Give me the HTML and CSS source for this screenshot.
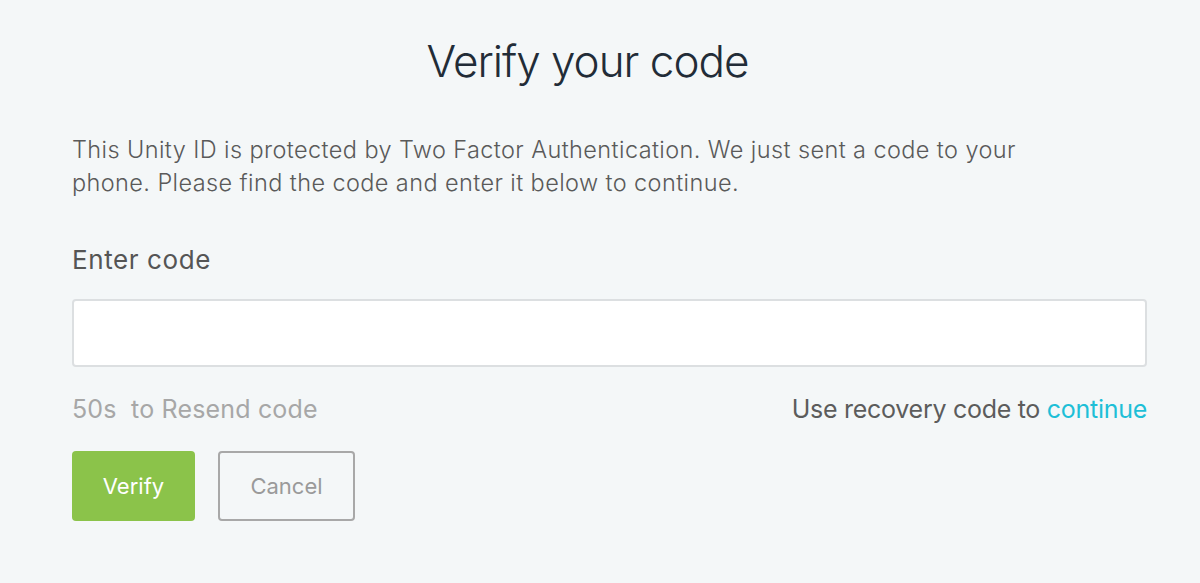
FILE: index.html
```html
<!DOCTYPE html>
<html lang="en">
<head>
<meta charset="utf-8">
<title>Verify your code</title>
<link rel="stylesheet" href="styles.css">
</head>
<body>
<main class="page">
  <h1 class="title">Verify your code</h1>
  <p class="intro">This Unity ID is protected by Two Factor Authentication. We just sent a code to your phone. Please find the code and enter it below to continue.</p>
  <label class="label" for="code">Enter code</label>
  <input class="code-input" id="code" type="text">
  <div class="meta-row">
    <span class="resend">50s&nbsp; to Resend code</span>
    <span class="recovery">Use recovery code to <a class="link" href="#">continue</a></span>
  </div>
  <div class="actions">
    <button class="btn btn-primary" type="button">Verify</button>
    <button class="btn btn-secondary" type="button">Cancel</button>
  </div>
</main>
</body>
</html>
```
FILE: styles.css
```css
html, body {
  margin: 0;
  padding: 0;
  background: #f4f7f8;
}
body {
  font-family: Inter, "Noto Sans", "Liberation Sans", sans-serif;
  color: #5a5a5a;
}
.page {
  width: 1075px;
  padding: 33px 0 0 72px;
  display: flex;
  flex-direction: column;
}
.title {
  margin: 0;
  padding-right: 44px;
  text-align: center;
  font-size: 44px;
  font-weight: 300;
  letter-spacing: -1px;
  line-height: 56px;
  color: #222c37;
}
.intro {
  margin: 45px 0 0 0;
  width: 990px;
  font-size: 23.5px;
  font-weight: 300;
  letter-spacing: 0.4px;
  line-height: 32.5px;
  color: #5a5a5a;
}
.label {
  margin-top: 45px;
  font-size: 26px;
  letter-spacing: 0.6px;
  line-height: 32px;
  color: #555;
}
.code-input {
  margin-top: 23px;
  box-sizing: border-box;
  width: 100%;
  height: 68px;
  border: 2px solid #dcdfe1;
  border-radius: 4px;
  background: #fff;
  outline: none;
  font: inherit;
  font-size: 22px;
  padding: 0 16px;
}
.meta-row {
  margin-top: 27px;
  display: flex;
  justify-content: space-between;
  align-items: baseline;
  font-size: 25px;
  line-height: 30px;
}
.resend {
  color: #a7a7a7;
  letter-spacing: 0.17px;
}
.recovery {
  color: #5c5c5c;
  letter-spacing: -0.28px;
}
.link {
  color: #1ebfd7;
  text-decoration: none;
}
.actions {
  margin-top: 27px;
  display: flex;
  gap: 23px;
}
.btn {
  box-sizing: border-box;
  height: 70px;
  padding: 0 30px;
  border-radius: 4px;
  font-family: inherit;
  font-size: 22px;
  cursor: pointer;
}
.btn-primary {
  width: 123px;
  border: none;
  background: #8bc34a;
  color: #fff;
}
.btn-secondary {
  width: 137px;
  border: 2px solid #a8a8a8;
  background: transparent;
  color: #9a9a9a;
}
```
